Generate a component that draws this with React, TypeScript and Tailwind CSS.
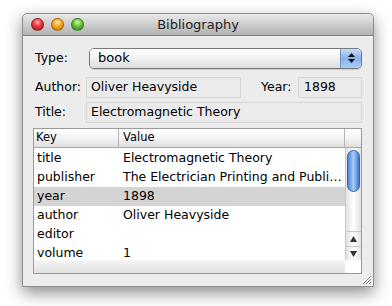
import React from 'react';

const rows = [
  { key: 'title', value: 'Electromagnetic Theory' },
  { key: 'publisher', value: 'The Electrician Printing and Publi…' },
  { key: 'year', value: '1898', selected: true },
  { key: 'author', value: 'Oliver Heavyside' },
  { key: 'editor', value: '' },
  { key: 'volume', value: '1' },
];

function Light({ color }: { color: string }) {
  return (
    <div
      className="w-[13px] h-[13px] rounded-full border border-black/30"
      style={{ background: color }}
    />
  );
}

export default function App() {
  return (
    <div className="w-[392px] h-[306px] bg-white pl-[22px] pt-[13px] font-['DejaVu_Sans',sans-serif] text-[12.5px] text-black">
      <div className="w-[352px] h-[274px] flex flex-col border border-[#8e8e8e] rounded-t-[5px] bg-[#ececec] shadow-[0_6px_16px_rgba(0,0,0,0.45)]">
        {/* Title bar */}
        <div className="relative h-[22px] shrink-0 flex items-center rounded-t-[5px] bg-gradient-to-b from-[#e9e9e9] to-[#b2b2b2] border-b border-[#7f7f7f]">
          <div className="flex items-center gap-[7px] pl-[8px]">
            <Light color="radial-gradient(circle at 50% 30%, #ffb0b0 0%, #e8353a 45%, #a01010 100%)" />
            <Light color="radial-gradient(circle at 50% 30%, #ffe9a0 0%, #f5a623 45%, #b06a00 100%)" />
            <Light color="radial-gradient(circle at 50% 30%, #d8ffb0 0%, #5fc235 45%, #2d7a10 100%)" />
          </div>
          <div className="absolute inset-0 flex items-center justify-center text-[13px] text-[#222]">Bibliography</div>
        </div>

        <div className="flex flex-col pl-[12px] pr-[11px]">
          {/* Type row */}
          <div className="flex items-center mt-[11px] h-[22px]">
            <div className="w-[54px]">Type:</div>
            <div className="flex-1 h-[21px] flex rounded-[5px] border border-[#7a7a7a] overflow-hidden shadow-[0_1px_1px_rgba(0,0,0,0.15)]">
              <div className="flex-1 flex items-center pl-[8px] bg-gradient-to-b from-white via-[#f2f2f2] to-[#dcdcdc] text-[13px]">book</div>
              <div className="w-[21px] flex flex-col items-center justify-center gap-[2px] border-l border-[#6d8fc4] bg-gradient-to-b from-[#c8dcf8] via-[#86b2ea] to-[#aacdf6]">
                <svg width="7" height="4" viewBox="0 0 7 4"><path d="M0 4 L3.5 0 L7 4 Z" fill="#111" /></svg>
                <svg width="7" height="4" viewBox="0 0 7 4"><path d="M0 0 L3.5 4 L7 0 Z" fill="#111" /></svg>
              </div>
            </div>
          </div>

          {/* Author / Year row */}
          <div className="flex items-center mt-[8px] h-[21px]">
            <div className="w-[51px]">Author:</div>
            <div className="w-[155px] h-[21px] flex items-center pl-[4px] border border-[#d6d6d6] bg-[#ebebeb]">Oliver Heavyside</div>
            <div className="ml-[20px] w-[37px]">Year:</div>
            <div className="flex-1 h-[21px] flex items-center pl-[5px] border border-[#d6d6d6] bg-[#ebebeb]">1898</div>
          </div>

          {/* Title row */}
          <div className="flex items-center mt-[4px] h-[21px]">
            <div className="w-[51px]">Title:</div>
            <div className="flex-1 h-[21px] flex items-center pl-[4px] border border-[#d6d6d6] bg-[#ebebeb]">Electromagnetic Theory</div>
          </div>

          {/* Table */}
          <div className="mt-[5px] -ml-[2px] h-[146px] flex flex-col border border-[#9a9a9a] bg-white">
            <div className="flex h-[19px] shrink-0 border-b border-[#a8a8a8] bg-gradient-to-b from-white via-[#f4f4f4] to-[#dedede] text-[11.5px]">
              <div className="w-[85px] pl-[2px] flex items-center border-r border-[#b4b4b4]">Key</div>
              <div className="flex-1 pl-[4px] flex items-center border-r border-[#b4b4b4]">Value</div>
              <div className="w-[16px] shrink-0" />
            </div>
            <div className="flex flex-1 min-h-0">
              <div className="flex-1 min-w-0 flex flex-col pt-[1px]">
                {rows.map((r) => (
                  <div
                    key={r.key}
                    className={`flex h-[19px] shrink-0 items-center text-[12.5px] ${r.selected ? 'bg-[#d4d4d4]' : ''}`}
                  >
                    <div className="w-[85px] shrink-0 pl-[3px]">{r.key}</div>
                    <div className="flex-1 pl-[4px] whitespace-nowrap">{r.value}</div>
                  </div>
                ))}
              </div>
              {/* Vertical scrollbar */}
              <div className="w-[16px] shrink-0 flex flex-col border-l border-[#c8c8c8] bg-gradient-to-r from-[#e2e2e2] via-white to-[#e2e2e2]">
                <div className="mt-[2px] mx-[1px] h-[42px] rounded-full border border-[#3a62a8] bg-gradient-to-r from-[#4f84d4] via-[#a9cdf6] to-[#3f76cb]" />
                <div className="flex-1" />
                <div className="h-[15px] flex items-center justify-center border-t border-[#c8c8c8]">
                  <svg width="7" height="6" viewBox="0 0 7 6"><path d="M0 6 L3.5 0 L7 6 Z" fill="#333" /></svg>
                </div>
                <div className="h-[14px] flex items-center justify-center border-t border-[#c8c8c8]">
                  <svg width="7" height="6" viewBox="0 0 7 6"><path d="M0 0 L3.5 6 L7 0 Z" fill="#333" /></svg>
                </div>
              </div>
            </div>
            {/* Horizontal bar area */}
            <div className="flex h-[13px] shrink-0">
              <div className="flex-1 bg-gradient-to-b from-[#f6f6f6] to-[#e0e0e0]" />
              <div className="w-[16px] bg-white" />
            </div>
          </div>
        </div>

        {/* Resize grip */}
        <div className="flex-1 flex justify-end items-end">
          <svg width="11" height="11" viewBox="0 0 11 11" className="mr-[1px] mb-[1px]">
            <path d="M10 2 L2 10 M10 5 L5 10 M10 8 L8 10" stroke="#8a8a8a" strokeWidth="1" />
          </svg>
        </div>
      </div>
    </div>
  );
}
